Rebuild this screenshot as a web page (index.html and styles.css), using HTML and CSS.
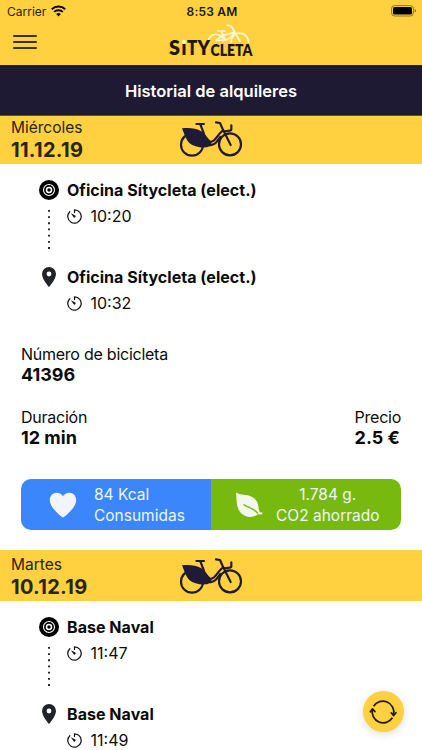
FILE: index.html
```html
<!DOCTYPE html>
<html lang="es">
<head>
<meta charset="utf-8">
<title>Historial de alquileres</title>
<link rel="stylesheet" href="styles.css">
</head>
<body>
<svg class="defs" width="0" height="0">
  <symbol id="bike" viewBox="0 0 246 150">
    <g fill="none" stroke="#201a30" stroke-width="6.5" stroke-linecap="round" stroke-linejoin="round">
      <circle cx="66" cy="89" r="33"/>
      <circle cx="180" cy="88" r="33"/>
      <path d="M79 27H102M91 28L101 54L109 80"/>
      <path d="M138 22L150 24L158 42L182 90M184 31V43Q184 47 179 47L164 49"/>
      <path d="M159 46C146 56 141 69 132 76Q121 84 108 80M151 66Q141 79 139 82Q130 92 110 91"/>
    </g>
    <path fill="#201a38" d="M36 40C55 37 78 39 94 49C106 57 111 68 122 78L124 87L112 97C89 99 70 94 58 84C49 76 47 66 43 58Z"/>
  </symbol>
  <symbol id="target" viewBox="0 0 20 20">
    <circle cx="10" cy="10" r="10"/>
    <circle cx="10" cy="10" r="5.5" fill="none" stroke="#fff" stroke-width="1.1"/>
    <circle cx="10" cy="10" r="2.5" fill="none" stroke="#fff" stroke-width="1.5"/>
  </symbol>
  <symbol id="pin" viewBox="0 0 14 20">
    <path fill="#202328" fill-rule="evenodd" d="M7 0A7 7 0 0 0 0 7C0 12.2 7 20 7 20S14 12.2 14 7A7 7 0 0 0 7 0ZM7 4.6A2.4 2.4 0 1 1 7 9.4A2.4 2.4 0 1 1 7 4.6Z"/>
  </symbol>
  <symbol id="timer" viewBox="0 0 15 15">
    <path fill="none" stroke="#151515" stroke-width="1.25" stroke-linecap="round" d="M7.5 3.5V.8A6.7 6.7 0 1 1 2.8 2.7"/>
    <path fill="#151515" d="M3.9 4.3L8.3 6.6A1.15 1.15 0 1 1 6.6 8.2Z"/>
  </symbol>
</svg>
<div class="screen">
  <header class="top">
    <div class="status">
      <div class="carrier">Carrier
        <svg width="15" height="12" viewBox="0 0 15 12"><g fill="none" stroke="#000" stroke-width="2"><path d="M.8 4.2A9.6 9.6 0 0 1 14.2 4.2"/><path d="M3.2 6.9A6.2 6.2 0 0 1 11.8 6.9"/></g><path d="M7.5 11.5L5.2 9A3.3 3.3 0 0 1 9.8 9Z"/></svg>
      </div>
      <div class="clock">8:53 AM</div>
      <svg class="battery" width="26" height="12" viewBox="0 0 26 12"><rect x=".6" y=".6" width="21.8" height="10.4" rx="3" fill="none" stroke="#8d7428"/><rect x="2" y="2" width="19" height="7.6" rx="1.6"/><path d="M23.8 4V7.6Q25 7 25 5.8T23.8 4Z" fill="#6b581f"/></svg>
    </div>
    <div class="nav">
      <div class="menu"><i></i><i></i><i></i></div>
      <svg class="logo" width="90" height="38" viewBox="0 0 90 38">
        <g fill="none" stroke="#fff6d2" stroke-width="1.7" stroke-linecap="round" stroke-linejoin="round">
          <path d="M42.3 17A7.6 7.6 0 0 1 57.4 17M65 18A8.8 8.8 0 0 1 82.6 18"/>
          <path d="M52 7H59M55.5 7.5L59.5 16L50 16.5L56.5 11Q63 11 68 8M61 1.2Q65.5 1.5 67 5L73.8 17M59.5 16Q64 15 68.5 9"/>
        </g>
        <g class="logo-text">
          <text x="3" y="31" font-size="20.5" textLength="11" lengthAdjust="spacingAndGlyphs">S</text>
          <text x="15.2" y="31" font-size="14.5" textLength="5.4" lengthAdjust="spacingAndGlyphs">I</text>
          <text x="20.9" y="31" font-size="20.5" textLength="10.3" lengthAdjust="spacingAndGlyphs">T</text>
          <text x="31.5" y="31" font-size="20.5" textLength="12.5" lengthAdjust="spacingAndGlyphs">Y</text>
          <text x="44.5" y="31.7" font-size="16.5" textLength="42" lengthAdjust="spacingAndGlyphs">CLETA</text>
        </g>
        <rect x="16.3" y="15.8" width="3.2" height="4" fill="#fff6d2"/>
      </svg>
    </div>
    <h1 class="title">Historial de alquileres</h1>
  </header>

  <main class="history">
    <section class="rental">
      <div class="banner">
        <div class="date"><span>Miércoles</span><b>11.12.19</b></div>
        <svg class="bike" width="82" height="50"><use href="#bike"/></svg>
      </div>
      <div class="detail">
        <div class="stop">
          <div class="marker"><svg width="20" height="20"><use href="#target"/></svg><svg class="dots" width="2" height="40"><path d="M1 1V40"/></svg></div>
          <div><div class="place">Oficina Sítycleta (elect.)</div><div class="time"><svg width="15" height="15"><use href="#timer"/></svg>10:20</div></div>
        </div>
        <div class="stop last">
          <div class="marker"><svg width="14" height="20"><use href="#pin"/></svg></div>
          <div><div class="place">Oficina Sítycleta (elect.)</div><div class="time"><svg width="15" height="15"><use href="#timer"/></svg>10:32</div></div>
        </div>
        <div class="fields">
          <div class="field"><span>Número de bicicleta</span><b>41396</b></div>
        </div>
        <div class="fields">
          <div class="field"><span>Duración</span><b>12 min</b></div>
          <div class="field"><span>Precio</span><b>2.5 €</b></div>
        </div>
        <div class="stats">
          <div class="stat kcal">
            <svg width="28" height="26" viewBox="0 0 28 26"><path fill="#f2f5fc" d="M14 25.5C12.6 25 .8 15.8.8 8.2C.8 3.9 3.8.8 7.7.8C10.3.8 12.7 2 14 4.2C15.3 2 17.7.8 20.3.8C24.2.8 27.2 3.9 27.2 8.2C27.2 15.8 15.4 25 14 25.5Z"/></svg>
            <p>84 Kcal<br>Consumidas</p>
          </div>
          <div class="stat co2">
            <svg width="28" height="26" viewBox="0 0 28 26"><path fill="#f3f8ec" d="M1 .5C6 4 14 1.5 19.5 6.5C24.5 11 23 17.5 24.8 20.2L27.5 20.5L27 22.6L23 22.3C19 25.5 12 26.2 7 22C1 17 1.8 8 1 .5Z"/><path fill="none" stroke="#77b90f" stroke-width="1.4" stroke-linecap="round" d="M9 12.8C12 15.5 18 15.5 22.5 21"/></svg>
            <p>1.784 g.<br>CO2 ahorrado</p>
          </div>
        </div>
      </div>
    </section>

    <section class="rental">
      <div class="banner">
        <div class="date"><span>Martes</span><b>10.12.19</b></div>
        <svg class="bike" width="82" height="50"><use href="#bike"/></svg>
      </div>
      <div class="detail">
        <div class="stop">
          <div class="marker"><svg width="20" height="20"><use href="#target"/></svg><svg class="dots" width="2" height="40"><path d="M1 1V40"/></svg></div>
          <div><div class="place">Base Naval</div><div class="time"><svg width="15" height="15"><use href="#timer"/></svg>11:47</div></div>
        </div>
        <div class="stop last">
          <div class="marker"><svg width="14" height="20"><use href="#pin"/></svg></div>
          <div><div class="place">Base Naval</div><div class="time"><svg width="15" height="15"><use href="#timer"/></svg>11:49</div></div>
        </div>
      </div>
    </section>
  </main>

  <button class="refresh" aria-label="Actualizar">
    <svg width="28" height="28" viewBox="0 0 28 28"><g fill="none" stroke="#201c10" stroke-width="1.8"><path d="M4.6 8.2A11 11 0 0 1 24.6 16.5M3.4 11.5A11 11 0 0 0 23.4 19.8"/></g><path fill="none" stroke="#201c10" stroke-width="1.6" stroke-linecap="round" stroke-linejoin="round" d="M1.3 13.8L3.5 10.8L6 13.6M22.3 14.9L24.7 17.6L27 14.7"/></svg>
  </button>
</div>
</body>
</html>
```

FILE: styles.css
```css
* { box-sizing: border-box; }
body { margin: 0; font-family: Inter, "Liberation Sans", sans-serif; color: #0b0b0b; background: #fff; }
.defs { position: absolute; }
.screen { position: relative; width: 422px; height: 750px; overflow: hidden; }
svg { display: block; flex: none; }

.top { position: relative; z-index: 1; height: 116px; background: #ffd040; }
.status { display: grid; grid-template-columns: 1fr auto 1fr; height: 22px; align-items: center; padding: 0 5px 0 7px; }
.carrier { display: flex; align-items: center; gap: 5px; font-size: 12px; color: #2b240d; }
.clock { font-size: 12px; font-weight: 600; color: #1a1608; letter-spacing: .2px; }
.battery { justify-self: end; }
.nav { display: grid; grid-template-columns: 1fr auto 1fr; height: 43px; padding-left: 13px; padding-right: 14px; }
.menu { display: flex; flex-direction: column; gap: 4px; padding-top: 13px; }
.menu i { width: 24px; height: 2px; background: #3b300f; border-radius: 1px; }
.logo { margin-top: 2px; overflow: visible; }
.logo-text { font-family: Lato, sans-serif; font-weight: 800; fill: #1d180c; }
.title { display: flex; align-items: center; justify-content: center; height: 51px; margin: 0; padding-top: 2px; background: #1f1a33; color: #fff; font-size: 16.5px; font-weight: 600; border-bottom: 1px solid #5e4d35; }

.history { margin-top: -3px; }
.banner { display: grid; grid-template-columns: 1fr auto 1fr; height: 51px; padding: 0 11px; background: #ffd040; }
.date { padding-top: 4px; color: #29250f; }
.date span, .date b { display: block; line-height: 22px; }
.date span { font-size: 15.5px; }
.date b { font-size: 20px; font-weight: 700; letter-spacing: .3px; }
.bike { margin-top: 2px; }

.detail { padding: 13px 21px 20px; }
.stop { display: flex; height: 87px; padding-left: 18px; gap: 8px; }
.stop.last { height: 52px; }
.marker { display: flex; flex-direction: column; align-items: center; width: 20px; padding-top: 3px; }
.dots { margin-top: 9px; }
.dots path { stroke: #111; stroke-width: 1.8; stroke-dasharray: 1.8 4.38; }
.place { font-size: 16px; font-weight: 700; line-height: 26px; letter-spacing: .04px; }
.time { display: flex; align-items: center; gap: 8.5px; font-size: 16px; line-height: 26px; }
.fields { display: flex; justify-content: space-between; margin-top: 28px; }
.fields + .fields { margin-top: 22px; }
.field span, .field b { display: block; line-height: 21px; }
.field span { font-size: 16px; letter-spacing: -.25px; }
.field b { margin-top: -1px; font-size: 18px; font-weight: 700; }

.stats { display: flex; margin-top: 31px; height: 51px; border-radius: 10px; overflow: hidden; }
.stat { display: flex; align-items: center; width: 190px; color: #eef5ff; font-size: 15.5px; line-height: 21px; }
.stat p { margin: 0; }
.kcal { background: #3b86fb; padding-left: 28px; gap: 17px; }
.co2 { background: #77b90f; padding-left: 24px; gap: 13px; text-align: center; }

.refresh { position: absolute; left: 363px; top: 691px; width: 41px; height: 41px; display: grid; place-items: center; padding: 0 2px 0 0; border: 0; border-radius: 50%; background: #ffd040; box-shadow: 0 2px 9px rgba(0,0,0,.14); }
```
